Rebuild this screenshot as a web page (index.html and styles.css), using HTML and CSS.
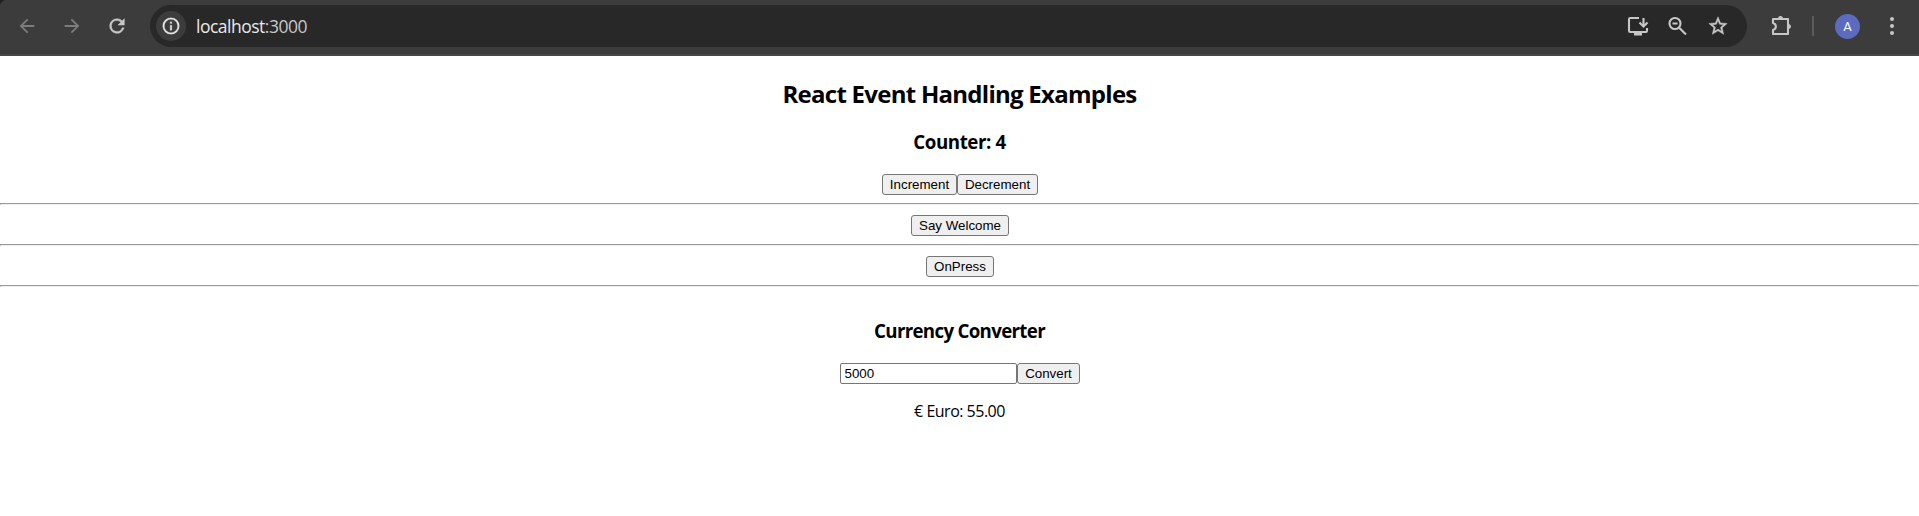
FILE: index.html
```html
<!DOCTYPE html>
<html lang="en">
<head>
<meta charset="utf-8">
<title>React Event Handling Examples</title>
<link rel="stylesheet" href="styles.css">
</head>
<body>
<header class="toolbar">
  <nav class="nav">
    <svg class="icon dim" viewBox="0 0 24 24"><path d="M20 11H7.83l5.59-5.59L12 4l-8 8 8 8 1.41-1.41L7.83 13H20z"/></svg>
    <svg class="icon dim" viewBox="0 0 24 24"><path d="M4 11h12.17l-5.59-5.59L12 4l8 8-8 8-1.41-1.41L16.17 13H4z"/></svg>
    <svg class="icon bold" viewBox="0 0 24 24"><path d="M17.65 6.35A7.96 7.96 0 0 0 12 4a8 8 0 1 0 7.73 10h-2.08A6 6 0 1 1 12 6c1.66 0 3.14.69 4.22 1.78L13 11h7V4z"/></svg>
  </nav>
  <div class="address">
    <span class="info"><svg class="icon bright" viewBox="0 0 24 24"><path d="M11 7h2v2h-2zm0 4h2v6h-2zm1-9a10 10 0 1 0 0 20 10 10 0 0 0 0-20zm0 18a8 8 0 1 1 0-16 8 8 0 0 1 0 16z"/></svg></span>
    <span class="url"><span class="host">localhost</span>:3000</span>
    <div class="actions">
      <svg class="stroke" viewBox="0 0 22 22"><path d="M12 3H3.200Q2 3 2 4.200V15.800Q2 17 3.200 17H18.800Q20 17 20 15.800V13M16.500 3V11M12.500 7.500L16.500 11.500L20.500 7.500"/><path class="solid" d="M7 17h8v3.500H7z"/></svg>
      <svg class="stroke" viewBox="0 0 22 22"><circle cx="8" cy="8.500" r="5.500"/><path d="M12.200 12.700L19 19.500M5.500 8.500H10.500"/></svg>
      <svg class="icon bold star" viewBox="0 0 24 24"><path d="M22 9.240l-7.190-.62L12 2 9.190 8.630 2 9.240l5.460 4.730L5.820 21 12 17.270 18.180 21l-1.630-7.030zM12 15.400l-3.760 2.270 1-4.280-3.320-2.880 4.380-.38L12 6.100l1.710 4.040 4.380.38-3.320 2.880 1 4.280z"/></svg>
    </div>
  </div>
  <div class="tools">
    <svg class="stroke puzzle" viewBox="0 0 22 22"><path stroke-linejoin="round" d="M3 4H18V19H3V15C6.800 14 6.800 9 3 8Z"/><path class="solid" d="M8 3.500a2.500 2.500 0 0 1 5 0zM18.500 9a2.500 2.500 0 0 1 0 5z"/></svg>
    <span class="divider"></span>
    <span class="avatar">A</span>
    <svg class="icon dots" viewBox="0 0 22 22"><circle cx="11" cy="4" r="2"/><circle cx="11" cy="11" r="2"/><circle cx="11" cy="18" r="2"/></svg>
  </div>
</header>
<main class="page">
  <h2 class="title">React Event Handling Examples</h2>
  <h3 class="counter">Counter: 4</h3>
  <div class="row"><button class="btn increment">Increment</button><button class="btn decrement">Decrement</button></div>
  <hr class="rule">
  <div class="row"><button class="btn welcome">Say Welcome</button></div>
  <hr class="rule">
  <div class="row"><button class="btn press">OnPress</button></div>
  <hr class="rule">
  <h3 class="converter">Currency Converter</h3>
  <div class="row"><input class="amount" type="text" value="5000"><button class="btn convert">Convert</button></div>
  <p class="result">€ Euro: 55.00</p>
</main>
</body>
</html>
```
FILE: styles.css
```css
* { box-sizing: border-box; }
body { margin: 0; background: #fff; color: #000; font-family: "Open Sans", "Noto Sans", sans-serif; }
.toolbar { display: flex; height: 56px; padding: 5px 16px 7px; background: radial-gradient(circle at 8px 8px, transparent 8px, #202020 9px) 0 0 / 8px 8px no-repeat, #3c3c3c; border-bottom: 2px solid #474747; }
.nav { display: flex; align-items: center; gap: 23px; width: 134px; }
.icon { display: block; width: 22px; height: 22px; fill: #c7c7c7; }
.dim { fill: #7c7c7c; }
.bold { stroke: #c7c7c7; stroke-width: 0.5; }
.bright { width: 20px; height: 20px; fill: #e3e3e3; stroke: #e3e3e3; stroke-width: 0.3; }
.stroke { display: block; width: 22px; height: 22px; fill: none; stroke: #c7c7c7; stroke-width: 2.1; }
.solid { fill: #c7c7c7; stroke: none; }
.address { display: flex; align-items: center; width: 1597px; height: 42px; padding: 0 18px 0 6px; border-radius: 21px; background: #282828; }
.info { display: flex; align-items: center; justify-content: center; width: 30px; height: 30px; border-radius: 50%; background: #3c3c3c; }
.url { margin: 0 0 0 10px; font-size: 17.5px; line-height: 24px; letter-spacing: -0.5px; color: #c7c7c7; }
.host { color: #e8e8e8; }
.actions { display: flex; align-items: center; gap: 18px; margin-left: auto; }
.tools { display: flex; align-items: center; height: 42px; }
.puzzle { margin-left: 23px; }
.divider { width: 2px; height: 20px; margin-left: 20px; background: #5c5c5c; }
.avatar { width: 25px; height: 25px; margin-left: 21px; border-radius: 50%; background: #5c6bc0; color: #fff; font: 13px/25px Roboto, sans-serif; text-align: center; }
.dots { margin-left: 21px; }
.page { display: flex; flex-direction: column; }
.title, .counter, .converter, .result { margin: 0; text-align: center; white-space: nowrap; }
.title { margin-top: 20px; font-size: 24px; line-height: 36px; letter-spacing: -0.73px; }
.counter { margin: 16px 0 19px; font-size: 18.7px; line-height: 27px; letter-spacing: -0.4px; }
.row { display: flex; justify-content: center; height: 21px; }
.rule { width: 100%; height: 2px; margin: 8px 0 10px; border: 1px solid; border-color: #9a9a9a #eee #eee #9a9a9a; }
.btn { height: 21px; padding: 0 0 0 1px; border: 1px solid #767676; border-radius: 3px; background: #efefef; color: #000; font: 13.333px "Liberation Sans", Arial, sans-serif; }
.increment { width: 75px; }
.decrement { width: 81px; }
.welcome { width: 98px; }
.press { width: 68px; }
.convert { width: 63px; }
.amount { width: 177px; height: 21px; padding: 1px 4px; border: 1px solid #767676; border-radius: 2px; background: #fff; font: 13.333px "Liberation Sans", Arial, sans-serif; }
.converter { margin: 20px 0 19px; font-size: 18.7px; line-height: 27px; letter-spacing: -0.68px; }
.result { margin-top: 15px; font-size: 16px; line-height: 24px; letter-spacing: -0.5px; }
```
